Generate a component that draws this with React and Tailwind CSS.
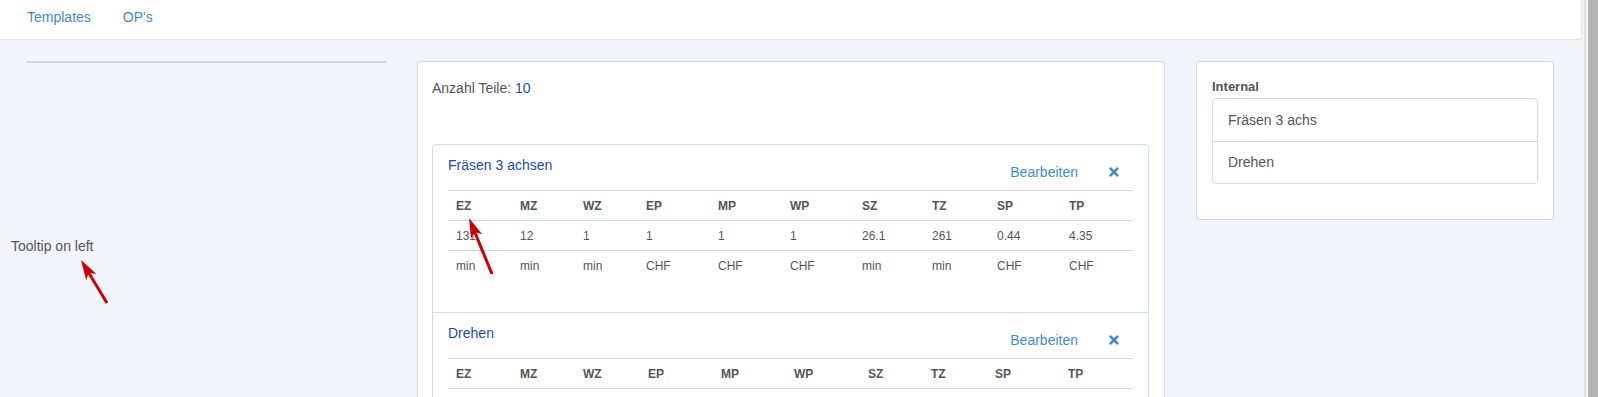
import React from "react";

const COLS1 = "grid grid-cols-[64px_63px_63px_72px_72px_72px_70px_65px_72px_72px]";
const COLS2 = "grid grid-cols-[64px_63px_65px_73px_73px_74px_63px_64px_73px_73px]";

const HEAD = ["EZ", "MZ", "WZ", "EP", "MP", "WP", "SZ", "TZ", "SP", "TP"];

function Row({ cols, cells, bold }) {
  return (
    <div className={`${cols} h-[30px] border-t border-[#d3d8dd]`}>
      {cells.map((c, i) => (
        <div
          key={i}
          className={`pl-[8px] flex items-center text-[12px] text-[#555] ${bold ? "font-bold" : ""}`}
        >
          {c}
        </div>
      ))}
    </div>
  );
}

function XIcon() {
  return (
    <svg width="10" height="10" viewBox="0 0 10 10" className="block">
      <path d="M1.6 1.6 L8.4 8.4 M8.4 1.6 L1.6 8.4" stroke="#3f89cf" strokeWidth="2.6" strokeLinecap="round" />
    </svg>
  );
}

function OpItem({ title, cols, rows, first, tail }) {
  return (
    <div className={`px-[15px] pt-[10px] pb-[32px] ${first ? "" : "border-t border-[#cfdae5]"}`}>
      <div className="flex justify-between h-[35px]">
        <div className="text-[14px] leading-[20px] text-[#1c4bad]">{title}</div>
        <div className="flex items-center h-[20px] mt-[7px]">
          <span className="text-[14px] leading-[20px] text-[#3f89cf]">Bearbeiten</span>
          <span className="ml-[31px] mr-[14px]">
            <XIcon />
          </span>
        </div>
      </div>
      <div>
        <Row cols={cols} cells={HEAD} bold />
        {rows.map((r, i) => (
          <Row key={i} cols={cols} cells={r} />
        ))}
        {tail ? <div className="h-[30px] border-t border-[#d3d8dd]" /> : null}
      </div>
    </div>
  );
}

function Arrow({ tip, tail }) {
  const dx = tip[0] - tail[0];
  const dy = tip[1] - tail[1];
  const len = Math.sqrt(dx * dx + dy * dy);
  const ux = dx / len;
  const uy = dy / len;
  const nx = -uy;
  const ny = ux;
  const L = 20;
  const W = 6;
  const notch = 15;
  const bx = tip[0] - L * ux;
  const by = tip[1] - L * uy;
  const p = [
    [tip[0], tip[1]],
    [bx + W * nx, by + W * ny],
    [tip[0] - notch * ux, tip[1] - notch * uy],
    [bx - W * nx, by - W * ny],
  ]
    .map((q) => q.join(","))
    .join(" ");
  return (
    <g>
      <line
        x1={tail[0]}
        y1={tail[1]}
        x2={tip[0] - 14 * ux}
        y2={tip[1] - 14 * uy}
        stroke="#cc0000"
        strokeWidth="3"
      />
      <polygon points={p} fill="#cc0000" />
    </g>
  );
}

export default function App() {
  return (
    <div className="relative w-[1598px] h-[397px] overflow-hidden flex bg-[#f1f4f8] font-['Liberation_Sans',Arial,sans-serif]">
      <div className="w-[1584px] shrink-0 flex flex-col">
        <nav className="shrink-0 h-[40px] w-[1582px] bg-white border-b border-r border-[#dfe5ec] rounded-br-[4px] flex items-start pt-[7px] pl-[27px] gap-[32px] text-[14px] leading-[20px] text-[#3f89cf]">
          <span>Templates</span>
          <span>OP's</span>
        </nav>
        <div className="shrink-0 flex items-start gap-[31px] pl-[26px] pt-[21px]">
          <div className="w-[360px] border-t-2 border-[#cbd6e2]">
            <div className="-ml-[15px] mt-[173px] text-[14px] leading-[20px] text-[#555]">Tooltip on left</div>
          </div>
          <div className="w-[748px] bg-white border border-[#cfdae5] rounded-[4px] pl-[14px] pr-[15px] pt-[16px]">
            <div className="text-[14px] leading-[20px] text-[#555]">
              Anzahl Teile: <span className="text-[#1c4bad]">10</span>
            </div>
            <div className="mt-[46px] border border-[#cfdae5] rounded-[4px]">
              <OpItem
                first
                title="Fräsen 3 achsen"
                cols={COLS1}
                rows={[
                  ["131", "12", "1", "1", "1", "1", "26.1", "261", "0.44", "4.35"],
                  ["min", "min", "min", "CHF", "CHF", "CHF", "min", "min", "CHF", "CHF"],
                ]}
              />
              <OpItem title="Drehen" cols={COLS2} rows={[]} tail />
            </div>
          </div>
          <div className="w-[358px] bg-white border border-[#cfdae5] rounded-[4px] px-[15px] pt-[15px] pb-[35px]">
            <div className="text-[13px] leading-[20px] font-bold text-[#555]">Internal</div>
            <div className="mt-[1px] border border-[#cfdae5] rounded-[4px] text-[14px] text-[#555]">
              <div className="h-[42px] px-[15px] flex items-center">Fräsen 3 achs</div>
              <div className="h-[42px] px-[15px] flex items-center border-t border-[#cfdae5]">Drehen</div>
            </div>
          </div>
        </div>
      </div>
      <div className="w-[14px] h-full shrink-0 flex">
        <div className="w-[2px] bg-[#dedede]" />
        <div className="w-[2px] bg-[#f7f7f7]" />
        <div className="w-[10px] bg-[#b4b4b4]" />
      </div>
      <svg className="absolute left-0 top-0 pointer-events-none" width="1598" height="397">
        <Arrow tip={[81, 260]} tail={[107, 303]} />
        <Arrow tip={[469, 218]} tail={[492, 274]} />
      </svg>
    </div>
  );
}
